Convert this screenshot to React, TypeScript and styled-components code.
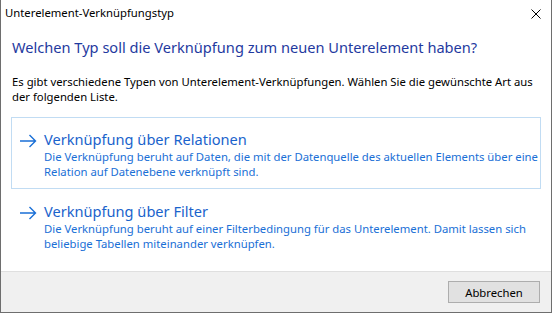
import styled, { createGlobalStyle } from 'styled-components'

const GlobalStyle = createGlobalStyle`
    html, body {
        margin: 0;
        padding: 0;
        background: #ffffff;
    }
    body {
        font-family: "Noto Sans", "Open Sans", sans-serif;
        font-size: 11.3px;
        color: #000000;
    }
`

interface LinkOption {
    title: string
    lines: string[]
}

const options: LinkOption[] = [
    {
        title: 'Verknüpfung über Relationen',
        lines: [
            'Die Verknüpfung beruht auf Daten, die mit der Datenquelle des aktuellen Elements über eine',
            'Relation auf Datenebene verknüpft sind.',
        ],
    },
    {
        title: 'Verknüpfung über Filter',
        lines: [
            'Die Verknüpfung beruht auf einer Filterbedingung für das Unterelement. Damit lassen sich',
            'beliebige Tabellen miteinander verknüpfen.',
        ],
    },
]

const introLines = [
    'Es gibt verschiedene Typen von Unterelement-Verknüpfungen. Wählen Sie die gewünschte Art aus',
    'der folgenden Liste.',
]

function ArrowIcon() {
    return (
        <svg width="18" height="14" viewBox="0 0 18 14">
            <path d="M1 7 H16.5 M10.5 1 L16.5 7 L10.5 13" fill="none" stroke="#1a6fd6" strokeWidth="1.4" />
        </svg>
    )
}

function CloseIcon() {
    return (
        <svg width="10" height="10" viewBox="0 0 10 10">
            <path d="M0.5 0.5 L9.5 9.5 M9.5 0.5 L0.5 9.5" stroke="#000" strokeWidth="1" />
        </svg>
    )
}

export default function App() {
    return (
        <>
            <GlobalStyle />
            <Window>
                <TitleBar>
                    <TitleText>Unterelement-Verknüpfungstyp</TitleText>
                    <CloseButton><CloseIcon /></CloseButton>
                </TitleBar>
                <Content>
                    <Heading>Welchen Typ soll die Verknüpfung zum neuen Unterelement haben?</Heading>
                    <Intro>
                        {introLines.map(line => <Line key={line}>{line}</Line>)}
                    </Intro>
                    <Options>
                        {options.map((option, index) => (
                            <CommandLink key={option.title} focused={index === 0}>
                                <ArrowSlot><ArrowIcon /></ArrowSlot>
                                <LinkBody>
                                    <LinkTitle>{option.title}</LinkTitle>
                                    <LinkText>
                                        {option.lines.map(line => <Line key={line}>{line}</Line>)}
                                    </LinkText>
                                </LinkBody>
                            </CommandLink>
                        ))}
                    </Options>
                </Content>
                <Footer>
                    <Button>Abbrechen</Button>
                </Footer>
            </Window>
        </>
    )
}

const Window = styled.div`
    box-sizing: border-box;
    width: 552px;
    height: 313px;
    display: flex;
    flex-direction: column;
    background: #ffffff;
    border: 1px solid #6e6e6e;
    border-top: none;
`

const TitleBar = styled.div`
    height: 26px;
    display: flex;
    align-items: center;
    justify-content: space-between;
    padding: 0 10px 0 4px;
`

const TitleText = styled.span`
    line-height: 26px;
    color: #000000;
`

const CloseButton = styled.div`
    display: flex;
    align-items: center;
    padding-top: 1px;
`

const Content = styled.div`
    flex: 1;
    padding: 10px 10px 0 10px;
    display: flex;
    flex-direction: column;
`

const Line = styled.div`
    white-space: nowrap;
`

const Heading = styled.div`
    font-size: 14.6px;
    line-height: 22px;
    color: #1f3aa0;
    margin: 0 0 0 1px;
    white-space: nowrap;
`

const Intro = styled.div`
    margin: 16px 0 0 1px;
    line-height: 15px;
`

const Options = styled.div`
    margin-top: 13px;
    display: flex;
    flex-direction: column;
`

const CommandLink = styled.div<{ focused: boolean }>`
    box-sizing: border-box;
    height: 72px;
    display: flex;
    padding: 12px 0 0 7px;
    border: 1px solid ${props => props.focused ? '#c1dcf3' : 'transparent'};
`

const ArrowSlot = styled.div`
    width: 25px;
    padding-top: 4px;
    flex-shrink: 0;
`

const LinkBody = styled.div`
    display: flex;
    flex-direction: column;
`

const LinkTitle = styled.div`
    font-size: 14.6px;
    line-height: 19px;
    color: #1a63cc;
`

const LinkText = styled.div`
    line-height: 15px;
    color: #1a6fd6;
`

const Footer = styled.div`
    height: 41px;
    box-sizing: border-box;
    background: #f0f0f0;
    border-top: 1px solid #dfdfdf;
    display: flex;
    align-items: flex-start;
    justify-content: flex-end;
    padding: 9px 11px 0 0;
`

const Button = styled.div`
    box-sizing: border-box;
    width: 92px;
    height: 22px;
    background: #e1e1e1;
    border: 1px solid #adadad;
    display: flex;
    align-items: center;
    justify-content: center;
    color: #000000;
`
